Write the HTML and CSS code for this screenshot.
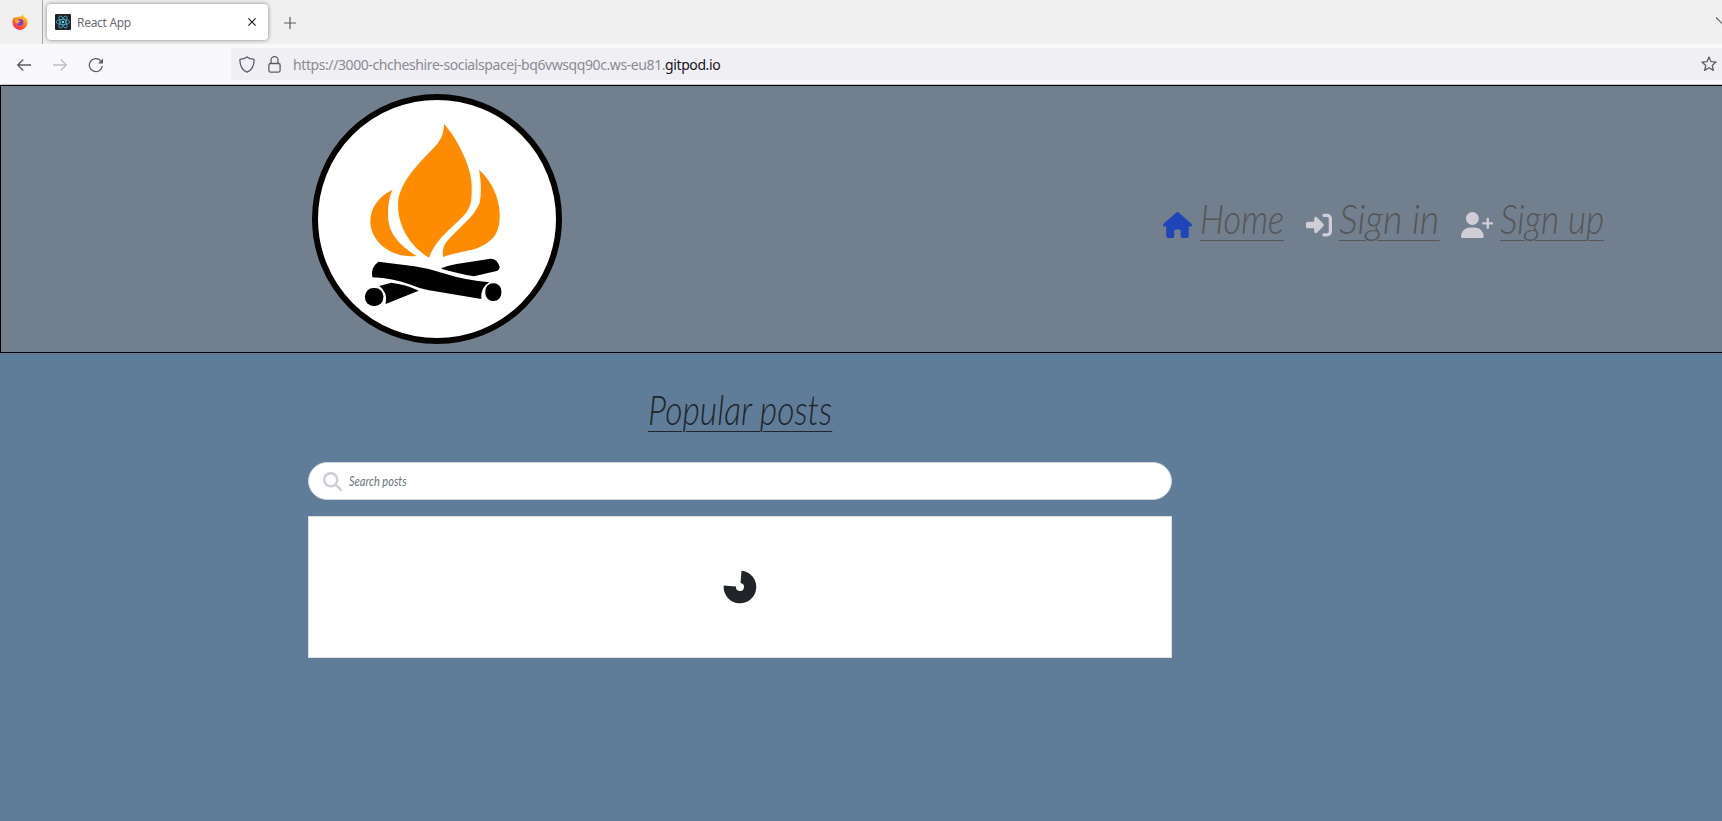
FILE: index.html
```html
<!DOCTYPE html>
<html lang="en">
<head>
<meta charset="utf-8">
<title>React App</title>
<link rel="stylesheet" href="styles.css">
</head>
<body>
<div class="tabs">
  <div class="pinned">
    <svg width="16" height="16" viewBox="0 0 16 16"><defs><linearGradient id="fx" x1=".8" y1="0" x2=".3" y2="1"><stop offset="0" stop-color="#ffe226"/><stop offset=".45" stop-color="#ff8a1e"/><stop offset="1" stop-color="#fa1e55"/></linearGradient></defs><path d="M10.5 0c.3 1.700 1.500 2.500 2.400 3.400C14.500 4.300 15.600 6 15.600 8.200A7.600 7.600 0 0 1 .4 8.400C.3 5.700 1.400 3.900 2.600 2.700l.3 1.400C3.800 3.200 4.800 3 6 3.100 7 1.900 8.400 3 9 2.500 9.400 1.500 9.800.7 10.500 0z" fill="url(#fx)"/><circle cx="8" cy="8.300" r="3.400" fill="#7b3fd0"/><path d="M2.800 5.400c1.800-.6 3.200 0 4.500 1.100 1 .1 1.200.7.400 1.300-1.200.7-1.700 1-1.200 1.900C4.300 9.700 3 8 2.800 5.400z" fill="#ffa02a"/></svg>
  </div>
  <div class="tab">
    <svg width="16" height="16" viewBox="0 0 16 16"><rect width="16" height="16" rx="1" fill="#20232a"/><g fill="none" stroke="#53bcd8" stroke-width=".75"><ellipse cx="8" cy="8" rx="6.700" ry="2.600"/><ellipse cx="8" cy="8" rx="6.700" ry="2.600" transform="rotate(60 8 8)"/><ellipse cx="8" cy="8" rx="6.700" ry="2.600" transform="rotate(120 8 8)"/></g><circle cx="8" cy="8" r="1.200" fill="#61dafb"/></svg>
    <span class="tab-title">React App</span>
    <svg width="8" height="8" viewBox="0 0 8 8"><path d="M.4.4l7.200 7.200M7.600.4L.4 7.600" stroke="#15141a" stroke-width="1.100"/></svg>
  </div>
  <svg class="plus" width="12" height="12" viewBox="0 0 12 12"><path d="M6 0v12M0 6h12" stroke="#5b5b66" stroke-width="1.200"/></svg>
  <svg class="more" width="6" height="8" viewBox="0 0 6 8"><path d="M0 .5l7 7" stroke="#5b5b66" stroke-width="1.200"/></svg>
</div>
<div class="toolbar">
  <div class="buttons">
    <svg width="16" height="16" viewBox="0 0 16 16" fill="none" stroke="#5b5b66" stroke-width="1.300"><path d="M15 8H1.800M7.300 2.500L1.700 8l5.600 5.500"/></svg>
    <svg width="16" height="16" viewBox="0 0 16 16" fill="none" stroke="#bfbfc4" stroke-width="1.300"><path d="M1 8h13.200M8.700 2.500L14.300 8l-5.600 5.500"/></svg>
    <svg width="16" height="16" viewBox="0 0 16 16" fill="none" stroke="#5b5b66" stroke-width="1.300"><path d="M14.300 9A6.500 6.500 0 1 1 12.600 3.700"/><path d="M15 1.500v5h-5z" fill="#5b5b66" stroke="none"/></svg>
  </div>
  <div class="address">
    <svg width="16" height="17" viewBox="0 0 16 17" fill="none" stroke="#5b5b66" stroke-width="1.300"><path d="M8 .9C6 2.500 3.800 3 1.500 3.200c-.5 0-.6.300-.6.700C.9 9.200 3 14 8 16.100c5-2.100 7.100-6.900 7.100-12.200 0-.4-.2-.7-.6-.7C12.200 3 10 2.500 8 .9z"/></svg>
    <svg class="lock" width="13" height="17" viewBox="0 0 13 17" fill="none" stroke="#5b5b66" stroke-width="1.300"><rect x=".9" y="7.500" width="11.200" height="8.600" rx="1.500"/><path d="M3 7.500V4.200a3.500 3.500 0 0 1 7 0v3.300"/></svg>
    <span class="url">https://3000-chcheshire-socialspacej-bq6vwsqq90c.ws-eu81.<b>gitpod.io</b></span>
    <svg class="star" width="16" height="16" viewBox="0 0 16 16" fill="none" stroke="#5b5b66" stroke-width="1.300" stroke-linejoin="round"><path d="M8 1l2 4.700 5.100.4-3.900 3.300 1.200 5L8 11.800l-4.400 2.600 1.200-5L.9 6.100 6 5.700z"/></svg>
  </div>
</div>
<header class="site-header">
  <svg class="logo" width="250" height="250" viewBox="36 27 750 750">
    <circle cx="411" cy="402" r="366" fill="#fff" stroke="#060402" stroke-width="18"/>
    <g fill="#ff8c00">
      <path d="M432 116C474 164 515 247 515 302C516 356 513 371 478 405C440 442 405 468 387 518C339 489 294 434 294 358C295 301 344 246 398 192C421 169 431 152 432 116Z"/>
      <path d="M277 314C233 336 211 371 211 410C212 467 270 520 349 513C309 485 264 454 264 389C264 359 268 337 277 314Z"/>
      <path d="M537 254C574 286 598 338 599 386C600 432 589 455 560 475C519 503 482 496 429 516C428 493 428 482 449 460C478 427 522 396 539 354C545 319 543 287 537 254Z"/>
    </g>
    <path d="M235 530L343 544Q386 550 430 565Q500 587 568 592Q541 607 544 642L383 615Q355 609 326 597Q280 580 217 577Q211 548 235 530Z"/>
    <path d="M423 551Q440 542 470 537L571 521Q591 520 599 545Q597 556 590 558L522 574Q477 566 423 551Z"/>
    <path d="M238 603L274 593Q317 598 356 617L257 657Q264 622 238 603Z"/>
    <rect x="195" y="609" width="55" height="54" rx="25"/>
    <rect x="556" y="595" width="48" height="53" rx="23"/>
  </svg>
  <nav class="nav">
    <a class="nav-item home"><svg width="29" height="26" viewBox="0 0 576 512" fill="#1f45b8"><path d="M575.800 255.500c0 18-15 32.100-32 32.100h-32l.7 160.200c0 2.700-.2 5.400-.5 8.100V472c0 22.100-17.900 40-40 40H392c-22.100 0-40-17.900-40-40V376c0-17.700-14.300-32-32-32h-64c-17.700 0-32 14.300-32 32v96c0 22.100-17.900 40-40 40h-80c-22.100 0-40-17.900-40-40V287.600H32c-18 0-32-14-32-32.100 0-9 3-17 10-24L266.400 8c7-7 15-8 22-8s15 2 21 7l255.400 224.500c8 7 12 15 11 24z"/></svg><span class="label"><span class="script">Home</span></span></a>
    <a class="nav-item signin"><svg width="26" height="26" viewBox="0 0 512 512" fill="#cfcdd5"><path d="M352 96h64c17.700 0 32 14.300 32 32v256c0 17.700-14.300 32-32 32h-64c-17.700 0-32 14.300-32 32s14.300 32 32 32h64c53 0 96-43 96-96V128c0-53-43-96-96-96h-64c-17.700 0-32 14.300-32 32s14.300 32 32 32zm-9.400 182.600c12.500-12.500 12.500-32.800 0-45.300l-128-128c-9.200-9.200-22.900-11.900-34.900-6.900S160 115.100 160 128v64H32c-17.700 0-32 14.300-32 32v64c0 17.700 14.300 32 32 32h128v64c0 12.900 7.800 24.600 19.800 29.600s25.700 2.200 34.900-6.900l128-128z"/></svg><span class="label"><span class="script">Sign in</span></span></a>
    <a class="nav-item signup"><svg width="32.500" height="26" viewBox="0 0 640 512" fill="#cfcdd5"><path d="M96 128a128 128 0 1 1 256 0 128 128 0 1 1-256 0zM0 482.300C0 383.800 79.800 304 178.300 304h91.400C368.200 304 448 383.800 448 482.300c0 16.400-13.300 29.700-29.700 29.700H29.700C13.300 512 0 498.700 0 482.300zM504 312v-64h-64c-13.300 0-24-10.700-24-24s10.700-24 24-24h64v-64c0-13.300 10.700-24 24-24s24 10.700 24 24v64h64c13.300 0 24 10.700 24 24s-10.700 24-24 24h-64v64c0 13.300-10.700 24-24 24s-24-10.700-24-24z"/></svg><span class="label"><span class="script">Sign up</span></span></a>
  </nav>
</header>
<main class="feed">
  <h1 class="heading"><span class="script">Popular posts</span></h1>
  <div class="search">
    <svg width="19" height="19" viewBox="0 0 512 512" fill="#cfcdd5"><path d="M416 208c0 45.900-14.900 88.300-40 122.700l126.600 126.700c12.500 12.500 12.500 32.800 0 45.300s-32.800 12.500-45.300 0L330.700 376c-34.400 25.200-76.800 40-122.700 40C93.100 416 0 322.900 0 208S93.100 0 208 0s208 93.100 208 208zM208 352a144 144 0 1 0 0-288 144 144 0 1 0 0 288z"/></svg>
    <span class="placeholder"><span class="script">Search posts</span></span>
  </div>
  <section class="results">
    <svg width="34" height="34" viewBox="-17 -17 34 34"><path d="M1.500-16.300A16.300 16.300 0 1 1-16.300-1.500L-4-.5A4 4 0 1 0 .5-4z" fill="#212529"/></svg>
  </section>
</main>
</body>
</html>
```
FILE: styles.css
```css
* { box-sizing: border-box; }
body { margin: 0; height: 821px; overflow: hidden; background: #5f7d99; font-family: "Noto Sans", sans-serif; }
svg { display: block; flex: none; }

.tabs { height: 44px; display: flex; align-items: center; background: #f0f0f0; }
.pinned { width: 43px; height: 44px; padding: 14px 0 0 12px; border-right: 1px solid #a9a9ab; }
.tab { width: 221px; height: 36px; margin-left: 4px; padding: 0 12px 0 8px; display: flex; align-items: center; background: #fff; border-radius: 4px; box-shadow: 0 0 4px rgba(0, 0, 0, .45); }
.tab-title { flex: 1; margin-left: 6px; font: 12px "Noto Sans", sans-serif; letter-spacing: -.3px; color: #6b6b74; }
.plus { margin: 1px 0 0 16px; }
.more { margin: 0 0 2px auto; }

.toolbar { height: 41px; display: flex; background: #f9f9fb; border-bottom: 1px solid #c6c9ca; }
.buttons { width: 231px; padding: 13px 0 0 16px; display: flex; gap: 20px; }
.address { flex: 1; height: 32px; margin-top: 4px; padding: 0 5px 0 8px; display: flex; align-items: center; background: #f0f0f4; border-radius: 4px 0 0 4px; }
.lock { margin-left: 13px; }
.url { margin-left: 12px; padding-top: 2px; font-size: 14px; line-height: 20px; white-space: nowrap; color: #8b8b92; letter-spacing: -.41px; }
.url b { font-weight: 400; color: #15141a; }
.star { margin-left: auto; }

.site-header { height: 268px; padding: 8px 118px 0 311px; display: flex; justify-content: space-between; background: #717f8e; border: 1px solid #000; border-right: 0; }
.nav { display: flex; padding-top: 99px; }
.nav-item { display: flex; color: #565656; }
.nav-item svg { margin-top: 19px; }
.home { width: 143px; }
.signin { width: 154.500px; }
.signup { width: 143.500px; }
.home .label { margin-left: 8px; }
.signin .label { margin-left: 7px; }
.signup .label { margin-left: 6.500px; }

.script { display: inline-block; white-space: nowrap; transform-origin: 0 0; font-family: Lato, sans-serif; font-style: italic; font-weight: 300; }
.label, .heading { font-size: 41px; line-height: 50px; }
.label .script, .heading .script { text-decoration: underline; text-decoration-thickness: 1px; text-underline-offset: 6px; }
.home .script { transform: scaleX(.837); }
.signin .script { transform: scaleX(.92); }
.signup .script { transform: scaleX(.857); }

.feed { width: 864px; margin-left: 308px; padding-top: 31px; }
.heading { height: 78px; margin: 0; padding-left: 340px; color: #212529; }
.heading .script { transform: scaleX(.82); }
.search { height: 38px; padding-left: 14px; display: flex; align-items: center; background: #fff; border: 1px solid #ced4da; border-radius: 19px; }
.placeholder { margin-left: 7px; font-size: 14px; line-height: 20px; color: #6c757d; }
.placeholder .script { font-weight: 400; transform: scaleX(.785); }
.results { height: 142px; margin-top: 16px; display: flex; align-items: center; justify-content: center; background: #fff; border: 1px solid #dfdfdf; }
```
